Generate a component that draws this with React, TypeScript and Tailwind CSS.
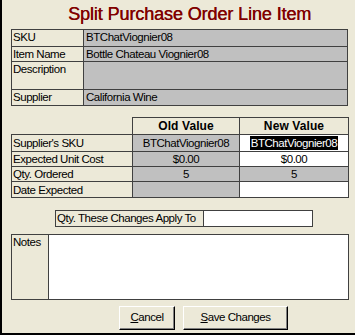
const font = "font-['Liberation_Sans',Arial,sans-serif] text-[11.5px] tracking-[-0.45px]"

const items = [
  { label: "SKU", value: "BTChatViognier08", h: "h-[17px]" },
  { label: "Item Name", value: "Bottle Chateau Viognier08", h: "h-[15px]" },
  { label: "Description", value: "", h: "h-[28px]" },
  { label: "Supplier", value: "California Wine", h: "h-[16px]" },
]

const changes = [
  { label: "Supplier's SKU", old: "BTChatViognier08", next: "BTChatViognier08", selected: true, gray: false, h: "h-[17px]" },
  { label: "Expected Unit Cost", old: "$0.00", next: "$0.00", selected: false, gray: false, h: "h-[15px]" },
  { label: "Qty. Ordered", old: "5", next: "5", selected: false, gray: true, h: "h-[15px]" },
  { label: "Date Expected", old: "", next: "", selected: false, gray: false, h: "h-[16px]" },
]

export default function App() {
  return (
    <div className={`w-[355px] h-[335px] bg-[#ECE9D8] border-l-2 border-b-2 border-black text-black ${font}`}>
      {/* Title */}
      <div className="h-[29px] pl-[66px] pt-[4px] text-[18px] leading-[20px] tracking-[-0.1px] text-[#800000] [text-shadow:0.4px_0_0_#800000]">
        Split Purchase Order Line Item
      </div>

      {/* Item info */}
      <table className="ml-[9px] w-[337px] border-collapse">
        <tbody>
          {items.map((it) => (
            <tr key={it.label} className={it.h}>
              <td className="w-[72px] border border-[#404040] px-[1px] align-top leading-[14px]">{it.label}</td>
              <td className="border border-[#404040] bg-[#C0C0C0] px-[2px] align-top leading-[14px]">{it.value}</td>
            </tr>
          ))}
        </tbody>
      </table>

      {/* Old / new values */}
      <table className="ml-[9px] mt-[11px] w-[338px] border-collapse">
        <tbody>
          <tr className="h-[17px]">
            <td className="w-[121px]" />
            <td className="w-[107px] border border-[#404040] text-center font-bold text-[12px] tracking-[0.1px] leading-[14px]">Old Value</td>
            <td className="border border-[#404040] text-center font-bold text-[12px] tracking-[0.1px] leading-[14px]">New Value</td>
          </tr>
          {changes.map((c) => (
            <tr key={c.label} className={c.h}>
              <td className="border border-[#404040] px-[1px] leading-[14px]">{c.label}</td>
              <td className="border border-[#404040] bg-[#C0C0C0] text-center leading-[14px]">{c.old}</td>
              <td className={`border border-[#404040] text-center leading-[14px] ${c.gray ? "bg-[#C0C0C0]" : "bg-white"}`}>
                {c.selected ? <span className="bg-black text-white px-[1px] py-[1px]">{c.next}</span> : c.next}
              </td>
            </tr>
          ))}
        </tbody>
      </table>

      {/* Qty these changes apply to */}
      <div className="mt-[12px] ml-[53px] flex h-[17px] w-[258px] border border-[#404040]">
        <div className="w-[148px] border-r border-[#404040] px-[1px] leading-[15px] whitespace-nowrap">Qty. These Changes Apply To</div>
        <div className="flex-1 bg-white" />
      </div>

      {/* Notes */}
      <div className="mt-[7px] ml-[9px] flex h-[66px] w-[338px] border border-[#404040]">
        <div className="w-[37px] border-r border-[#404040] px-[1px] leading-[14px]">Notes</div>
        <div className="flex-1 bg-white" />
      </div>

      {/* Buttons */}
      <div className="mt-[6px] ml-[117px] flex gap-[8px]">
        <button className="h-[24px] w-[56px] border border-b-black border-r-black border-t-white border-l-white bg-[#ECE9D8] shadow-[inset_-1px_-1px_0_#808080]">
          <span className="underline">C</span>ancel
        </button>
        <button className="h-[24px] w-[105px] border border-b-black border-r-black border-t-white border-l-white bg-[#ECE9D8] shadow-[inset_-1px_-1px_0_#808080]">
          <span className="underline">S</span>ave Changes
        </button>
      </div>
    </div>
  )
}
